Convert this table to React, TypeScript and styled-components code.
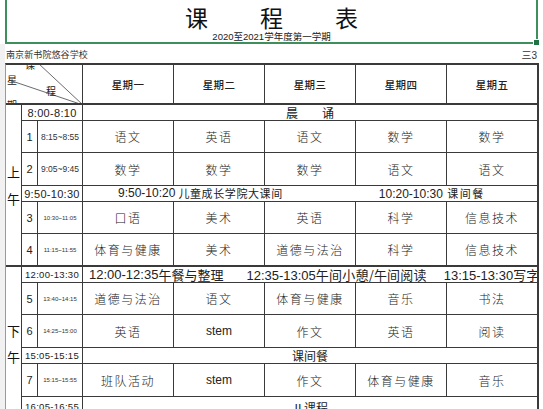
import React from 'react';
import styled, { createGlobalStyle } from 'styled-components';

const CJK = `"Noto Sans CJK SC", sans-serif`;
const NUM = `"Liberation Sans", "Noto Sans CJK SC", sans-serif`;
const LINE = '#3a3a3a';

const Global = createGlobalStyle`
  html, body { margin: 0; padding: 0; background: #ffffff; }
  body { width: 543px; height: 409px; overflow: hidden; font-family: ${NUM}; }
`;

const Sheet = styled.div`
  display: flex;
  align-items: flex-start;
  width: 543px;
  height: 409px;
  overflow: hidden;
  background: #fff;
`;

const RowHeads = styled.div`
  flex: none;
  width: 5px;
  height: 365px;
  margin-top: 44px;
  background: #f1f1f1;
`;

const Main = styled.div`
  flex: none;
  width: 538px;
  display: flex;
  flex-direction: column;
  & > * { flex: none; }
`;

const TitleCell = styled.div`
  box-sizing: border-box;
  width: 533px;
  height: 44px;
  border: 2px solid #3f8f5c;
  border-top: 0;
  position: relative;
  display: flex;
  flex-direction: column;
  align-items: center;
`;

const Handle = styled.span`
  position: absolute;
  right: -4px;
  bottom: -4px;
  width: 5px;
  height: 5px;
  background: #217346;
  border: 1px solid #fff;
`;

const Title = styled.div`
  margin-top: 5px;
  font-family: ${CJK};
  font-size: 23px;
  line-height: 24px;
  letter-spacing: 2px;
  margin-right: -2px;
  color: #111;
`;

const Subtitle = styled.div`
  margin-top: 2px;
  font-family: ${NUM};
  font-size: 9.5px;
  line-height: 11px;
  color: #222;
`;

const SubCJK = styled.span`
  font-family: ${CJK};
`;

const SchoolRow = styled.div`
  box-sizing: border-box;
  height: 19px;
  width: 534px;
  display: flex;
  align-items: center;
  justify-content: space-between;
  padding: 1px 2px 0 1px;
  font-family: ${CJK};
  color: #333;
`;

const School = styled.span`
  font-size: 9px;
  letter-spacing: 0.1px;
`;

const Klass = styled.span`
  font-size: 10px;
  font-family: ${NUM};
`;

const Grid = styled.div`
  display: grid;
  width: 534px;
  box-sizing: border-box;
  border-top: 2px solid ${LINE};
  border-left: 1px solid #9a9a9a;
  grid-template-columns: 16px 16px 45px 91px 91px 91px 91px 92px;
  grid-template-rows: 40px 16px 32px 33px 16px 32px 33px 16px 32px 33px 16px 33px 24px;
`;

const Cell = styled.div<{ $cols?: number; $rows?: number; $thick?: boolean; $last?: boolean }>`
  box-sizing: border-box;
  grid-column: span ${(p) => p.$cols ?? 1};
  grid-row: span ${(p) => p.$rows ?? 1};
  border-right: ${(p) => (p.$last ? 2 : 1)}px solid ${LINE};
  border-bottom: ${(p) => (p.$thick ? 2 : 1)}px solid ${LINE};
  display: flex;
  align-items: center;
  justify-content: center;
  overflow: hidden;
  white-space: nowrap;
  color: #222;
`;

const Corner = styled(Cell)`
  position: relative;
  border-bottom-width: 2px;
`;

const CornerLines = styled.svg`
  position: absolute;
  left: 0;
  top: 0;
  width: 77px;
  height: 40px;
`;

const CornerLabel = styled.span<{ $x: number; $y: number }>`
  position: absolute;
  left: ${(p) => p.$x}px;
  top: ${(p) => p.$y}px;
  font-family: ${CJK};
  font-size: 10px;
  line-height: 10px;
  color: #222;
`;

const DayHead = styled(Cell)`
  border-bottom-width: 2px;
  font-family: ${CJK};
  font-size: 10.5px;
  font-weight: 500;
  letter-spacing: 0.3px;
`;

const Session = styled(Cell)<{ $lh: number }>`
  flex-direction: column;
  font-family: ${CJK};
  font-size: 13px;
  line-height: ${(p) => p.$lh}px;
  color: #111;
`;

const SlotTime = styled(Cell)<{ $size: number }>`
  font-family: ${NUM};
  font-size: ${(p) => p.$size}px;
  letter-spacing: 0.3px;
  line-height: 14px;
`;

const SlotTimeLow = styled(SlotTime)`
  align-items: flex-start;
  padding-top: 3px;
`;

const Num = styled(Cell)`
  font-family: ${NUM};
  font-size: 11px;
`;

const PeriodTime = styled(Cell)<{ $size: number }>`
  font-family: ${NUM};
  font-size: ${(p) => p.$size}px;
  color: #333;
`;

const Subject = styled(Cell)<{ $latin?: boolean }>`
  font-family: ${(p) => (p.$latin ? NUM : CJK)};
  font-size: 12px;
  font-weight: ${(p) => (p.$latin ? 400 : 300)};
  letter-spacing: ${(p) => (p.$latin ? 0 : 1.5)}px;
  color: #222;
`;

const Banner = styled(Cell)<{ $start?: number; $size?: number; $top?: number }>`
  justify-content: ${(p) => (p.$start !== undefined ? 'flex-start' : 'center')};
  align-items: ${(p) => (p.$top !== undefined ? 'flex-start' : 'center')};
  padding-left: ${(p) => p.$start ?? 0}px;
  padding-top: ${(p) => p.$top ?? 0}px;
  font-family: ${CJK};
  font-size: ${(p) => p.$size ?? 12}px;
  line-height: 15px;
`;

const Piece = styled.span<{ $gap?: number; $ls?: number }>`
  margin-left: ${(p) => p.$gap ?? 0}px;
  letter-spacing: ${(p) => p.$ls ?? 0.2}px;
`;

const Digits = styled.span<{ $size: number }>`
  font-family: ${NUM};
  font-size: ${(p) => p.$size}px;
  letter-spacing: 0;
`;

const days = ['星期一', '星期二', '星期三', '星期四', '星期五'];

type Period = { n: string; t: string; ts: number; s: string[]; thick?: boolean };

function PeriodRow({ p }: { p: Period }) {
  return (
    <>
      <Num $thick={p.thick}>{p.n}</Num>
      <PeriodTime $size={p.ts} $thick={p.thick}>{p.t}</PeriodTime>
      {p.s.map((s, i) => (
        <Subject key={i} $latin={s === 'stem'} $thick={p.thick} $last={i === 4}>
          {s}
        </Subject>
      ))}
    </>
  );
}

export default function App() {
  return (
    <>
      <Global />
      <Sheet>
        <RowHeads />
        <Main>
          <TitleCell>
            <Title>课　　程　　表</Title>
            <Subtitle>
              2020<SubCJK>至</SubCJK>2021<SubCJK>学年度第一学期</SubCJK>
            </Subtitle>
            <Handle />
          </TitleCell>
          <SchoolRow>
            <School>南京新书院悠谷学校</School>
            <Klass>三3</Klass>
          </SchoolRow>
          <Grid>
            <Corner $cols={3}>
              <CornerLines viewBox="0 0 77 40">
                <line x1="32" y1="-2" x2="77" y2="40" stroke="#444" strokeWidth="0.8" />
                <line x1="3" y1="15" x2="77" y2="40" stroke="#444" strokeWidth="0.8" />
              </CornerLines>
              <CornerLabel $x={19} $y={-5}>课</CornerLabel>
              <CornerLabel $x={1} $y={10}>星</CornerLabel>
              <CornerLabel $x={40} $y={21}>程</CornerLabel>
              <CornerLabel $x={1} $y={35}>期</CornerLabel>
            </Corner>
            {days.map((d, i) => (
              <DayHead key={d} $last={i === 4}>{d}</DayHead>
            ))}

            <Session $rows={6} $thick $lh={27}>
              <span>上</span>
              <span>午</span>
            </Session>
            <SlotTime $cols={2} $size={11}>8:00-8:10</SlotTime>
            <Banner $cols={5} $last>晨　　诵</Banner>
            <PeriodRow p={{ n: '1', t: '8:15~8:55', ts: 8.5, s: ['语文', '英语', '语文', '数学', '数学'] }} />
            <PeriodRow p={{ n: '2', t: '9:05~9:45', ts: 8.5, s: ['数学', '数学', '数学', '语文', '语文'] }} />
            <SlotTime $cols={2} $size={11}>9:50-10:30</SlotTime>
            <Banner $cols={5} $last $start={35} $size={11}>
              <Digits $size={12}>9:50-10:20 </Digits>
              <Piece $gap={3} $ls={0.6}>儿童成长学院大课间</Piece>
              <Piece $gap={96}>
                <Digits $size={12}>10:20-10:30 </Digits>
                <Piece $gap={1} $ls={1.5}>课间餐</Piece>
              </Piece>
            </Banner>
            <PeriodRow p={{ n: '3', t: '10:30~11:05', ts: 6, s: ['口语', '美术', '英语', '科学', '信息技术'] }} />
            <PeriodRow p={{ n: '4', t: '11:15~11:55', ts: 6, thick: true, s: ['体育与健康', '美术', '道德与法治', '科学', '信息技术'] }} />

            <Session $rows={6} $lh={26}>
              <span>下</span>
              <span>午</span>
            </Session>
            <SlotTime $cols={2} $size={9.5}>12:00-13:30</SlotTime>
            <Banner $cols={5} $last $start={6} $size={13}>
              <Digits $size={13}>12:00-12:35</Digits>午餐与整理
              <Piece $gap={23}><Digits $size={13}>12:35-13:05</Digits>午间小憩/午间阅读</Piece>
              <Piece $gap={17}><Digits $size={13}>13:15-13:30</Digits>写字</Piece>
            </Banner>
            <PeriodRow p={{ n: '5', t: '13:40~14:15', ts: 6, s: ['道德与法治', '语文', '体育与健康', '音乐', '书法'] }} />
            <PeriodRow p={{ n: '6', t: '14:25~15:00', ts: 6, s: ['英语', 'stem', '作文', '英语', '阅读'] }} />
            <SlotTime $cols={2} $size={9.5}>15:05-15:15</SlotTime>
            <Banner $cols={5} $last>课间餐</Banner>
            <PeriodRow p={{ n: '7', t: '15:15~15:55', ts: 6, s: ['班队活动', 'stem', '作文', '体育与健康', '音乐'] }} />
            <SlotTimeLow $cols={2} $size={9.5}>16:05-16:55</SlotTimeLow>
            <Banner $cols={5} $last $top={3}>Ⅱ课程</Banner>
          </Grid>
        </Main>
      </Sheet>
    </>
  );
}
